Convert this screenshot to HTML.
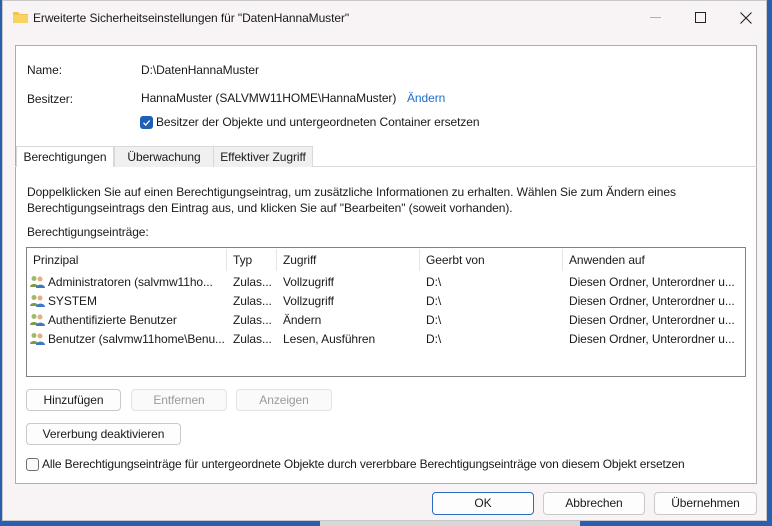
<!DOCTYPE html>
<html><head><meta charset="utf-8"><style>
*{box-sizing:border-box;margin:0;padding:0}
body{width:772px;height:526px;overflow:hidden;background:#2a5fb0;font-family:"Liberation Sans",sans-serif;font-size:12px;letter-spacing:-0.08px;color:#1a1a1a;position:relative}
.a{position:absolute;white-space:nowrap}
.win{position:absolute;left:2px;top:0;width:765px;height:521px;background:#f8f4f6;border:1px solid #c8c8c8}
.panel{position:absolute;left:15px;top:45px;width:742px;height:439px;background:#fff;border:1px solid #adadad}
.btn{position:absolute;height:22px;border:1px solid #c9c9c9;border-radius:4px;background:#fdfdfd;text-align:center;line-height:20px;font-size:12px}
.dis{color:#9a9a9a;border-color:#e2e2e2;background:#fafafa}
.tab{position:absolute;top:146px;height:21px;line-height:20px;padding:0 0;text-align:center;border:1px solid #d9d9d9;border-bottom:none;background:#f0f0f0}
.ic{display:inline-block;width:15px;height:13px;vertical-align:-2px;margin-right:3px;position:relative}
</style></head><body>
<div class="a" style="left:320px;top:505px;width:260px;height:21px;background:#d8d8d8"></div>
<div class="win"></div>
<svg class="a" style="left:13px;top:11px" width="15" height="12"><path d="M0 1h5l2 2h8v9H0z" fill="#f3c64a"/><path d="M0 4h15v8H0z" fill="#f7d461"/></svg>
<div class="a" style="left:33px;top:11px;font-size:12px">Erweiterte Sicherheitseinstellungen für "DatenHannaMuster"</div>
<div class="a" style="left:650px;top:17px;width:11px;height:1px;background:#b0b0b0"></div>
<div class="a" style="left:695px;top:12px;width:11px;height:11px;border:1px solid #222"></div>
<svg class="a" style="left:740px;top:12px" width="12" height="12"><path d="M0.5 0.5L11.5 11.5M11.5 0.5L0.5 11.5" stroke="#222" stroke-width="1.1"/></svg>
<div class="panel"></div>
<div class="a" style="left:27px;top:63px">Name:</div>
<div class="a" style="left:141px;top:63px">D:\DatenHannaMuster</div>
<div class="a" style="left:27px;top:92px">Besitzer:</div>
<div class="a" style="left:141px;top:91px">HannaMuster (SALVMW11HOME\HannaMuster)</div>
<div class="a" style="left:407px;top:91px;color:#1a6fc9">Ändern</div>
<div class="a" style="left:140px;top:116px;width:13px;height:13px;background:#1f5fb8;border-radius:3px"></div>
<svg class="a" style="left:140px;top:116px" width="13" height="13"><path d="M3.5 6.8l2.2 2.2 4-4.5" stroke="#fff" stroke-width="1.3" fill="none"/></svg>
<div class="a" style="left:156px;top:115px">Besitzer der Objekte und untergeordneten Container ersetzen</div>
<div class="a" style="left:15px;top:166px;width:742px;height:1px;background:#d9d9d9"></div>
<div class="tab" style="left:16px;width:98px;background:#fff;height:21px">Berechtigungen</div>
<div class="tab" style="left:114px;width:100px">Überwachung</div>
<div class="tab" style="left:213px;width:100px">Effektiver Zugriff</div>
<div class="a" style="left:27px;top:184px;line-height:16px">Doppelklicken Sie auf einen Berechtigungseintrag, um zusätzliche Informationen zu erhalten. Wählen Sie zum Ändern eines<br>Berechtigungseintrags den Eintrag aus, und klicken Sie auf "Bearbeiten" (soweit vorhanden).</div>
<div class="a" style="left:27px;top:225px">Berechtigungseinträge:</div>
<div class="a" style="left:26px;top:247px;width:720px;height:130px;border:1px solid #828282;background:#fff"></div>
<div class="a" style="left:226px;top:249px;width:1px;height:22px;background:#e5e5e5"></div>
<div class="a" style="left:276px;top:249px;width:1px;height:22px;background:#e5e5e5"></div>
<div class="a" style="left:419px;top:249px;width:1px;height:22px;background:#e5e5e5"></div>
<div class="a" style="left:562px;top:249px;width:1px;height:22px;background:#e5e5e5"></div>
<div class="a" style="left:33px;top:253px">Prinzipal</div>
<div class="a" style="left:233px;top:253px">Typ</div>
<div class="a" style="left:283px;top:253px">Zugriff</div>
<div class="a" style="left:426px;top:253px">Geerbt von</div>
<div class="a" style="left:569px;top:253px">Anwenden auf</div>
<div class="a" style="left:30px;top:273px;line-height:19px">
<span class="ic"><svg width="15" height="13"><circle cx="4" cy="3.5" r="2.5" fill="#a3b86c"/><path d="M0 12c0-4 8-4 8 0z" fill="#7d9a4a"/><circle cx="10" cy="4" r="2.5" fill="#e0b080"/><path d="M6 13c0-4.5 9-4.5 9 0z" fill="#3f78c4"/></svg></span>Administratoren (salvmw11ho...<br>
<span class="ic"><svg width="15" height="13"><circle cx="4" cy="3.5" r="2.5" fill="#a3b86c"/><path d="M0 12c0-4 8-4 8 0z" fill="#7d9a4a"/><circle cx="10" cy="4" r="2.5" fill="#e0b080"/><path d="M6 13c0-4.5 9-4.5 9 0z" fill="#3f78c4"/></svg></span>SYSTEM<br>
<span class="ic"><svg width="15" height="13"><circle cx="4" cy="3.5" r="2.5" fill="#a3b86c"/><path d="M0 12c0-4 8-4 8 0z" fill="#7d9a4a"/><circle cx="10" cy="4" r="2.5" fill="#e0b080"/><path d="M6 13c0-4.5 9-4.5 9 0z" fill="#3f78c4"/></svg></span>Authentifizierte Benutzer<br>
<span class="ic"><svg width="15" height="13"><circle cx="4" cy="3.5" r="2.5" fill="#a3b86c"/><path d="M0 12c0-4 8-4 8 0z" fill="#7d9a4a"/><circle cx="10" cy="4" r="2.5" fill="#e0b080"/><path d="M6 13c0-4.5 9-4.5 9 0z" fill="#3f78c4"/></svg></span>Benutzer (salvmw11home\Benu...</div>
<div class="a" style="left:233px;top:273px;line-height:19px">Zulas...<br>Zulas...<br>Zulas...<br>Zulas...</div>
<div class="a" style="left:283px;top:273px;line-height:19px">Vollzugriff<br>Vollzugriff<br>Ändern<br>Lesen, Ausführen</div>
<div class="a" style="left:426px;top:273px;line-height:19px">D:\<br>D:\<br>D:\<br>D:\</div>
<div class="a" style="left:569px;top:273px;line-height:19px">Diesen Ordner, Unterordner u...<br>Diesen Ordner, Unterordner u...<br>Diesen Ordner, Unterordner u...<br>Diesen Ordner, Unterordner u...</div>
<div class="btn" style="left:26px;top:389px;width:95px">Hinzufügen</div>
<div class="btn dis" style="left:131px;top:389px;width:96px">Entfernen</div>
<div class="btn dis" style="left:236px;top:389px;width:96px">Anzeigen</div>
<div class="btn" style="left:26px;top:423px;width:155px">Vererbung deaktivieren</div>
<div class="a" style="left:26px;top:458px;width:13px;height:13px;border:1px solid #6e6e6e;border-radius:3px;background:#fafafa"></div>
<div class="a" style="left:42px;top:457px;letter-spacing:-0.15px">Alle Berechtigungseinträge für untergeordnete Objekte durch vererbbare Berechtigungseinträge von diesem Objekt ersetzen</div>
<div class="btn" style="left:432px;top:492px;width:102px;border:1px solid #2a6cc4;height:23px">OK</div>
<div class="btn" style="left:543px;top:492px;width:102px;height:23px">Abbrechen</div>
<div class="btn" style="left:654px;top:492px;width:103px;height:23px">Übernehmen</div>
</body></html>
